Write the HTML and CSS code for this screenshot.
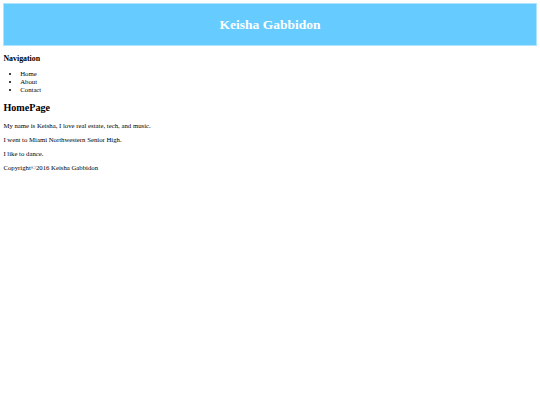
FILE: index.html
```html
<!DOCTYPE html>
<html>
<head>
<meta charset="utf-8">
<title>Keisha Gabbidon</title>
<link rel="stylesheet" href="styles.css">
</head>
<body class="page">
<header class="site-header">
<h1 class="site-title">Keisha Gabbidon</h1>
</header>
<nav class="site-nav">
<h3 class="nav-title">Navigation</h3>
<ul class="nav-list">
<li>Home</li>
<li>About</li>
<li>Contact</li>
</ul>
</nav>
<main class="content">
<h2 class="page-title">HomePage</h2>
<p>My name is Keisha, I love real estate, tech, and music.</p>
<p>I went to Miami Northwestern Senior High.</p>
<p>I like to dance.</p>
</main>
<footer class="site-footer">
<p>Copyright©2016 Keisha Gabbidon</p>
</footer>
</body>
</html>
```
FILE: styles.css
```css
.page {
  margin: 3.375px;
  font-family: "Liberation Serif", "Times New Roman", serif;
  font-size: 6.75px;
  line-height: 1.15;
  color: #000;
  background: #fff;
}
.site-header {
  background: #66ccff;
  border: 1px solid #b0e4ff;
  padding: 3.35px;
  text-align: center;
}
.site-title {
  color: #fff;
  font-size: 2em;
  margin: 0.67em 0;
}
.nav-title {
  font-size: 1.17em;
  margin: 1em 0;
}
.nav-list {
  margin: 1em 0;
  padding-left: 2.5em;
}
.page-title {
  font-size: 1.5em;
  line-height: 1.1;
  margin: 0.83em 0;
}
.content p,
.site-footer p {
  line-height: 1.08;
  margin: 1em 0;
}
```
